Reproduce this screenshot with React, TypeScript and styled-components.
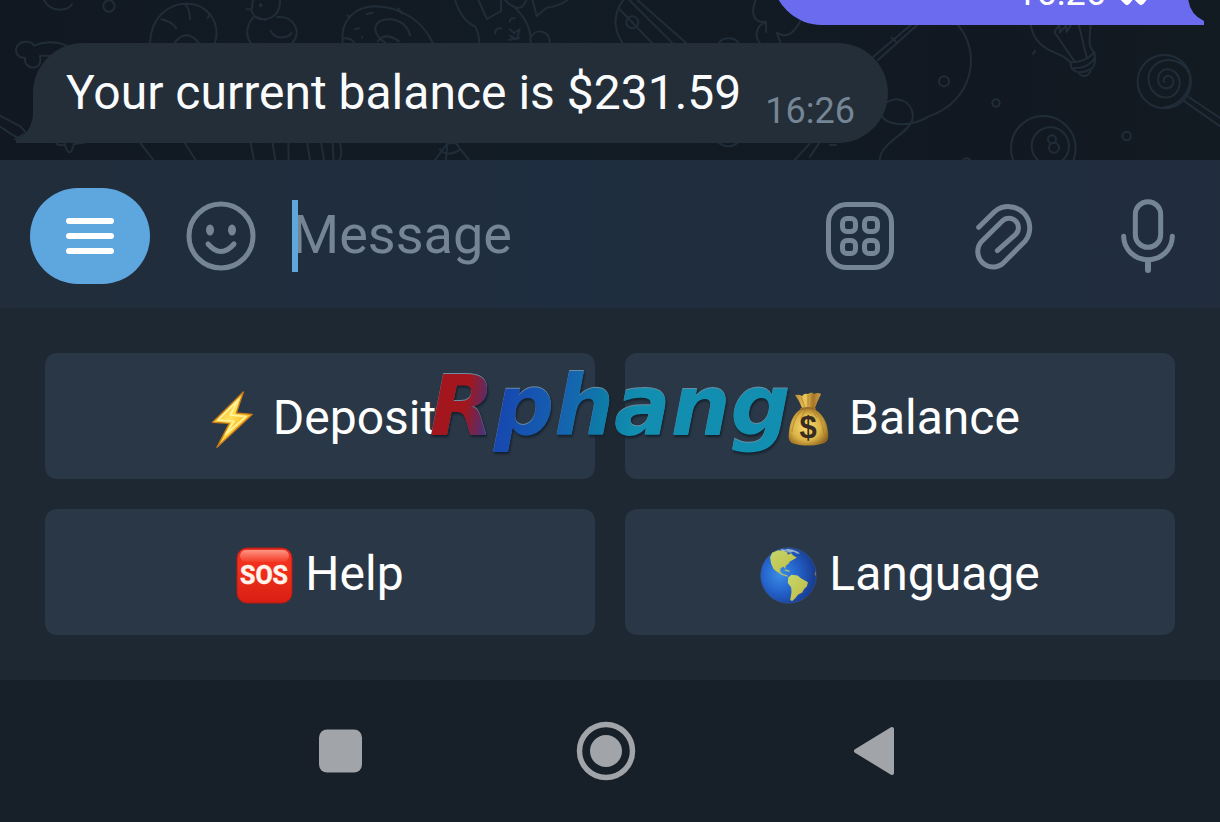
import React from "react";
import styled, { createGlobalStyle } from "styled-components";

const GlobalStyle = createGlobalStyle`
  * { box-sizing: border-box; }
  body { margin: 0; background: #171f28; font-family: Roboto, sans-serif; }
  button { border: 0; padding: 0; margin: 0; background: none; color: inherit; font: inherit; cursor: pointer; }
  svg { display: block; flex: none; }
`;

const Screen = styled.div`
  display: flex;
  flex-direction: column;
  min-height: 100vh;
`;

const Chat = styled.main`
  position: relative;
  flex: 1 0 160px;
  height: 160px;
  display: flex;
  flex-direction: column;
  justify-content: flex-end;
  gap: 18px;
  padding: 0 32px 17px 33px;
  overflow: hidden;
  background: linear-gradient(90deg, #111821, #121c25 45%, #111821 80%, #121a22);
`;

const Wallpaper = styled.svg`
  position: absolute;
  left: 0;
  bottom: 0;
  fill: none;
  stroke: #202d38;
  stroke-width: 6;
  stroke-linecap: round;
  stroke-linejoin: round;
`;

const Bubble = styled.article<{ $own?: boolean }>`
  position: relative;
  flex: none;
  align-self: ${(p) => (p.$own ? "flex-end" : "flex-start")};
  display: flex;
  align-items: flex-end;
  justify-content: flex-end;
  gap: ${(p) => (p.$own ? 12 : 24)}px;
  min-width: ${(p) => (p.$own ? 416 : 0)}px;
  min-height: 100px;
  padding: ${(p) => (p.$own ? "12px 40px 12px 33px" : "12px 33px")};
  border-radius: ${(p) => (p.$own ? "50px 50px 0 50px" : "50px 50px 50px 0")};
  background: ${(p) => (p.$own ? "#6a6bef" : "#232e39")};
  color: ${(p) => (p.$own ? "#ffffff" : "#758594")};
`;

const Tail = styled.svg<{ $own?: boolean }>`
  position: absolute;
  bottom: 0;
  ${(p) => (p.$own ? "left: 100%;" : "right: 100%;")}
  fill: ${(p) => (p.$own ? "#6a6bef" : "#232e39")};
`;

const MessageText = styled.p`
  margin: 0;
  color: #fafbfd;
  font-size: 48px;
  line-height: 76px;
`;

const Time = styled.time`
  font-size: 36px;
  line-height: 40px;
`;

const Composer = styled.form`
  flex: none;
  display: flex;
  align-items: center;
  gap: 36px;
  height: 148px;
  padding: 4px 24px 0 30px;
  background: linear-gradient(90deg, #212d3a, #1f2d40 45%, #212d3d);
  color: #758594;
`;

const MenuButton = styled.button`
  flex: none;
  display: flex;
  flex-direction: column;
  align-items: center;
  justify-content: center;
  gap: 9px;
  width: 120px;
  height: 96px;
  border-radius: 48px;
  background: #5ea6de;
`;

const MenuBar = styled.span`
  width: 48px;
  height: 6px;
  border-radius: 3px;
  background: #fff;
`;

const IconButton = styled.button<{ $width: number }>`
  flex: none;
  display: flex;
  align-items: center;
  justify-content: center;
  width: ${(p) => p.$width}px;
  height: 96px;

  svg {
    fill: none;
    stroke: #758594;
    stroke-linecap: round;
    stroke-linejoin: round;
  }
`;

const Field = styled.div`
  position: relative;
  flex: 1;
  min-width: 0;
`;

const Caret = styled.span`
  position: absolute;
  left: 0;
  top: 0;
  width: 6px;
  height: 72px;
  background: #5ea6de;
`;

const MessageInput = styled.input`
  display: block;
  width: 100%;
  height: 72px;
  padding: 0 0 4px;
  border: 0;
  outline: 0;
  background: none;
  color: #fff;
  font: 54px Roboto, sans-serif;
  caret-color: transparent;

  &::placeholder { color: #758594; opacity: 1; }
`;

const Actions = styled.div`
  flex: none;
  display: flex;
  gap: 48px;
`;

const Keyboard = styled.section`
  position: relative;
  flex: none;
  display: grid;
  grid-template-columns: 1fr 1fr;
  gap: 30px;
  padding: 45px;
  background: #1e2832;
`;

const Key = styled.button`
  display: flex;
  align-items: center;
  justify-content: center;
  gap: 12px;
  height: 126px;
  padding-top: 3px;
  border-radius: 12px;
  background: #2a3746;
  color: #fff;
  font-size: 48px;
  line-height: 56px;

  svg { margin-top: 4px; }
`;

const Watermark = styled.span`
  position: absolute;
  left: 50%;
  top: 48px;
  transform: translateX(-50%);
  padding: 0 6px;
  font: italic bold 84px/100px "DejaVu Sans", sans-serif;
  color: transparent;
  background: linear-gradient(100deg, #a3161d 13%, #5c2c68 18%, #1747b0 22%, #1562b0 38%, #0f7aa8 48%, #128fb0 58%);
  background-clip: text;
  -webkit-background-clip: text;
  filter: drop-shadow(0 -1px 0 #6a8da0) drop-shadow(1px 2px 1px #14202c);
  pointer-events: none;
`;

const SystemBar = styled.nav`
  flex: none;
  display: flex;
  align-items: center;
  justify-content: center;
  gap: 206px;
  height: 142px;
  padding-right: 8px;
  background: #171f28;
`;

const SystemButton = styled.button`
  width: 60px;
  height: 60px;

  svg { fill: #a1a4a8; stroke: #a1a4a8; }
`;

const Doodles = () => (
  <Wallpaper width="1220" height="160" viewBox="0 0 1220 160" aria-hidden="true">
    <g transform="scale(.3333)">
      <path d="M132 0q15 28 45 29t39-16" />
      <circle cx="327" cy="18" r="17" />
      <path d="M102 137c-7-17-49-18-54 12 0 16 12 24 27 25-3 21 16 33 33 27 14-5 15-18 12-34h32M102 137q50-20 98 0" />
      <path d="M0 347l62 33q24 22 11 33-12 4-30-5L0 380M45 418l25-15" />
      <path d="M450 128c4-78 56-118 112-117 60 0 102 58 83 117M484 58q32 7 45 27M556 13q14 15 14 44M631 42l-8 12M524 128q35-44 72 0" />
      <path d="M740 28h14l3 10c12 28 55 25 74 0 19-30 6-70-25-73-30 2-52 30-49 58M762 50c-22 23-27 55-10 78M797 60l-25-8M831 52c52-8 76 47 46 76M812 92q14 25 40 20 16-2 22-13" />
      <circle cx="782" cy="16" r="3" />
      <path d="M1028 128c-8-66 36-108 96-109 82 2 145 45 174 109M1230 106c-13-62-107-61-104-17 3 18 15 30 30 39M1042 47l8 6M1100 42l18-4M1065 88l12-3M1086 110v3M1030 115q23-3 33 13M1194 25l12 16M1133 124q24-30 64 0" />
      <path d="M170 432q18 7 24 0 15 50 28 0l30-4M422 430l38 50M555 430l32 50M752 430l10 50M818 430l8 50M865 430l1 50M922 430l8 50M964 430l8 50M998 430l3 50M1020 430q9 36-2 50" />
    </g>
    <g transform="translate(400) scale(.3333)">
      <path d="M165 0c15 48 37 69 61 80q12 26 12 48M235 0l26 57 42-24V0M315 0q45 48 64 0M340 18q53 50 52 104v6M398 0l12 48 30-25q40-5 62-23M395 108c16-25 55-14 54 20M286 101q-3-17 18-16M330 65q-2-10 14-11M329 87l13 12 17-11-8 30-20-10M327 119l30-5" />
      <path d="M670 0c-31 43-29 88-3 128M661 30l94 98M688 0l128 128M712 0l146 128M958 128c8-17 46-19 57 0" />
      <circle cx="697" cy="67" r="18" />
      <path d="M1067 0c-13 31-13 70 31 66-31 13-35 43-19 62M1098 66v30M1130 98q40 26 71-35M1130 98l12 30" />
      <path d="M105 480l37-50h26l39 50M120 448q24 26 61 0M142 431l-4 49M958 430q28 18 53 0M1184 480l46-50" />
    </g>
    <g transform="translate(810) scale(.3333)">
      <path d="M190 170l115-97M204 180l120-107M245 113l13 12M442 73c73 81 51 230-87 277-65 39-133 20-137-1M232 306c38-26 88 12 74 56-13 41-93 64-97 118M0 470l27-40M60 435h18" />
      <circle cx="402" cy="244" r="15" />
      <circle cx="558" cy="309" r="11" />
      <circle cx="950" cy="408" r="13" />
      <circle cx="470" cy="487" r="12" />
      <path d="M662 73c8 52 41 73 77 87q28 10 43 29c-1 26 27 36 57 20 17-7 17-26 15-50-23-21-14-46-12-86M733 96l61 89M806 73l24 98M733 96l15-22 2 24 18-22 2 20 14-23M783 187q45-2 67-27M787 205q47 2 67-30M808 222q20 16 34-8M669 162l6-9" />
      <circle cx="1063" cy="245" r="80" />
      <path d="M1062 246c-5-16 15-25 25-12 10 18-4 32-22 31-30-6-25-54 3-57 50-1 54 66 15 82-52 17-88-50-55-88 51-54 136 1 107 64q-20 48-72 56M1136 291l94 63M1124 304l106 75" />
      <circle cx="700" cy="445" r="97" />
      <circle cx="721" cy="438" r="56" />
      <circle cx="726" cy="418" r="12" />
      <circle cx="732" cy="443" r="15" />
    </g>
  </Wallpaper>
);

const Bolt = () => (
  <svg width="57" height="57" viewBox="60 64 171 171" aria-hidden="true">
    <defs>
      <linearGradient id="bolt" x1="0" y1="0" x2="1" y2="1">
        <stop offset="0" stopColor="#f09a16" />
        <stop offset=".45" stopColor="#ffe15a" />
        <stop offset=".6" stopColor="#ffca35" />
        <stop offset="1" stopColor="#f0930f" />
      </linearGradient>
    </defs>
    <path d="M178 67L86 158l50 3-37 72 106-99-48-4z" fill="url(#bolt)" stroke="#c87a18" strokeWidth="4" strokeLinejoin="round" />
    <path d="M163 90l-61 61 48 3-25 40 61-53-47-5z" fill="none" stroke="#fff49a" strokeWidth="5" strokeLinejoin="round" />
  </svg>
);

const MoneyBag = () => (
  <svg width="57" height="57" viewBox="0 0 57 57" aria-hidden="true">
    <defs>
      <radialGradient id="bag" cx=".45" cy=".5" r=".6">
        <stop offset="0" stopColor="#f7dd72" />
        <stop offset=".6" stopColor="#dcb346" />
        <stop offset="1" stopColor="#8f6420" />
      </radialGradient>
      <linearGradient id="neck" x1="0" x2="1">
        <stop offset="0" stopColor="#b98733" />
        <stop offset=".4" stopColor="#ecc85a" />
        <stop offset=".7" stopColor="#a8762a" />
        <stop offset="1" stopColor="#cda045" />
      </linearGradient>
    </defs>
    <path d="M15 4q4-1 7 1 2-3 6-2 4-3 6 0 4-2 7 0-3 6-6 14H22Q19 9 15 4z" fill="url(#neck)" />
    <path d="M21 18h13c8 4 13 12 14 23 1 8-1 11-7 12-8 2-18 2-26 0-6-1-7-5-6-12 1-11 5-19 12-23z" fill="url(#bag)" />
    <path d="M22 18c-5 6-9 13-10 23M26 18l-5 9M32 18l5 9M35 19c5 7 8 15 9 24M21 6l4 10M33 5l-2 11M28 4v12" fill="none" stroke="#a97c2b" strokeWidth="1" opacity=".7" />
    <path d="M21 18q7-2 14 0" fill="none" stroke="#9a6d2a" strokeWidth="2" strokeLinecap="round" />
    <text x="28" y="47" textAnchor="middle" fontFamily="Liberation Sans, sans-serif" fontSize="31" fontWeight="700" fill="#382b20">$</text>
  </svg>
);

const Sos = () => (
  <svg width="57" height="57" viewBox="0 0 57 57" aria-hidden="true">
    <defs>
      <linearGradient id="sos" x1="0" y1="0" x2="0" y2="1">
        <stop offset="0" stopColor="#e93124" />
        <stop offset=".35" stopColor="#f3301b" />
        <stop offset="1" stopColor="#d71f12" />
      </linearGradient>
      <linearGradient id="sosShine" x1="0" y1="0" x2="0" y2="1">
        <stop offset="0" stopColor="#ff9683" />
        <stop offset="1" stopColor="#f33a27" />
      </linearGradient>
    </defs>
    <rect x="1" y="1" width="55" height="55" rx="10" fill="url(#sos)" stroke="#b21c14" strokeWidth="1" />
    <rect x="4" y="3" width="49" height="12" rx="6" fill="url(#sosShine)" />
    <text x="28" y="37" textAnchor="middle" fontFamily="Liberation Sans Narrow, Roboto, sans-serif" fontSize="25" fontWeight="700" fill="#fff3ee" stroke="#fff3ee" strokeWidth=".5">SOS</text>
  </svg>
);

const Globe = () => (
  <svg width="57" height="57" viewBox="64 53 170 170" aria-hidden="true">
    <defs>
      <radialGradient id="sea" cx=".35" cy=".48" r=".65">
        <stop offset="0" stopColor="#3a8ee8" />
        <stop offset=".5" stopColor="#2462cb" />
        <stop offset="1" stopColor="#173a8e" />
      </radialGradient>
      <linearGradient id="land" x1="0" y1="0" x2="1" y2="1">
        <stop offset="0" stopColor="#c3d86c" />
        <stop offset=".6" stopColor="#c3c552" />
        <stop offset="1" stopColor="#cb9a28" />
      </linearGradient>
    </defs>
    <circle cx="149" cy="138" r="83" fill="url(#sea)" stroke="#34538c" strokeWidth="2" />
    <path d="M100 70L94 84L97 102L104 118L113 126L122 131L128 132L124 124L126 116L134 112L139 118L141 109L149 103L153 96L162 92L174 84L164 79L157 72L147 76L145 68L134 64L118 63z" fill="url(#land)" />
    <path d="M126 58l13 3 9-3 16 4 14 6 5 6-11-2-7-5-13 3-11-5-12 1z" fill="#c6d6d4" opacity=".7" />
    <path d="M122 129q8 8 24 11M138 121l14 5" fill="none" stroke="#b2c16d" strokeWidth="4" />
    <path d="M148 144L158 136L176 138L186 146L207 158L204 170L195 179L190 189L178 195L169 206L160 214L154 211L158 188L157 174L147 160z" fill="url(#land)" />
    <path d="M230 124q-5 8 0 17z" fill="#a98a35" />
  </svg>
);

const keys = [
  { label: "Deposit", icon: <Bolt /> },
  { label: "Balance", icon: <MoneyBag /> },
  { label: "Help", icon: <Sos /> },
  { label: "Language", icon: <Globe /> },
];

export default function App() {
  return (
    <Screen>
      <GlobalStyle />
      <Chat>
        <Doodles />
        <Bubble $own>
          <Time>16:26</Time>
          <svg width="30" height="42" viewBox="0 0 30 42" fill="none" stroke="#fff" strokeWidth="6" strokeLinecap="round" strokeLinejoin="round" aria-label="Read" role="img">
            <path d="M2 24l7 7 15-18M18 26l5 5 15-18" />
          </svg>
          <Tail $own width="16" height="50" viewBox="0 0 16 50">
            <path d="M0 50V22q1 17 16 24v4z" />
          </Tail>
        </Bubble>
        <Bubble>
          <MessageText>Your current balance is $231.59</MessageText>
          <Time>16:26</Time>
          <Tail width="17" height="50" viewBox="0 0 17 50">
            <path d="M17 50V22Q15 40 0 47v3z" />
          </Tail>
        </Bubble>
      </Chat>

      <Composer onSubmit={(e) => e.preventDefault()}>
        <MenuButton type="button" aria-label="Menu">
          <MenuBar />
          <MenuBar />
          <MenuBar />
        </MenuButton>
        <IconButton type="button" $width={70} aria-label="Emoji">
          <svg width="70" height="70" viewBox="0 0 70 70" strokeWidth="5">
            <circle cx="35" cy="35" r="32" />
            <ellipse cx="24" cy="29" rx="4" ry="5.5" style={{ fill: "#758594", stroke: "none" }} />
            <ellipse cx="46" cy="29" rx="4" ry="5.5" style={{ fill: "#758594", stroke: "none" }} />
            <path d="M22 43q13 15 26 0" />
          </svg>
        </IconButton>
        <Field>
          <MessageInput type="text" placeholder="Message" aria-label="Message" />
          <Caret />
        </Field>
        <Actions>
          <IconButton type="button" $width={96} aria-label="Bot keyboard">
            <svg width="68" height="68" viewBox="0 0 68 68" strokeWidth="5">
              <rect x="2.5" y="2.5" width="63" height="63" rx="18" />
              <rect x="16.5" y="16.5" width="13" height="13" rx="4.5" />
              <rect x="38.5" y="16.5" width="13" height="13" rx="4.5" />
              <rect x="16.5" y="38.5" width="13" height="13" rx="4.5" />
              <rect x="38.5" y="38.5" width="13" height="13" rx="4.5" />
            </svg>
          </IconButton>
          <IconButton type="button" $width={96} aria-label="Attach">
            <svg width="60" height="68" viewBox="522 65 180 204" strokeWidth="15">
              <path d="M536 141L585 93A64 64 0 0 1 675 183L610.500 247.500A46 46 0 0 1 545.500 182.500L607 122A28 28 0 0 1 647 162L592 211" />
            </svg>
          </IconButton>
          <IconButton type="button" $width={96} aria-label="Record voice">
            <svg width="56" height="76" viewBox="960 54 168 228" strokeWidth="15">
              <rect x="1006" y="65" width="76" height="137" rx="38" />
              <path d="M971 169A73 70 0 0 0 1117 169" />
              <path d="M1044 242V270" strokeWidth="18" />
            </svg>
          </IconButton>
        </Actions>
      </Composer>

      <Keyboard>
        {keys.map((k) => (
          <Key key={k.label} type="button">
            {k.icon}
            {k.label}
          </Key>
        ))}
        <Watermark>Rphang</Watermark>
      </Keyboard>

      <SystemBar aria-label="System navigation">
        <SystemButton type="button" aria-label="Recent apps">
          <svg width="60" height="60" viewBox="0 0 60 60" strokeWidth="0">
            <rect x="9" y="8.500" width="43" height="43" rx="8" />
          </svg>
        </SystemButton>
        <SystemButton type="button" aria-label="Home">
          <svg width="60" height="60" viewBox="0 0 60 60">
            <circle cx="30" cy="30" r="26.500" strokeWidth="5.500" style={{ fill: "none" }} />
            <circle cx="30" cy="30" r="16" strokeWidth="0" />
          </svg>
        </SystemButton>
        <SystemButton type="button" aria-label="Back">
          <svg width="60" height="60" viewBox="0 0 60 60" strokeWidth="4" strokeLinejoin="round">
            <path d="M50 8v44L14 30z" />
          </svg>
        </SystemButton>
      </SystemBar>
    </Screen>
  );
}
